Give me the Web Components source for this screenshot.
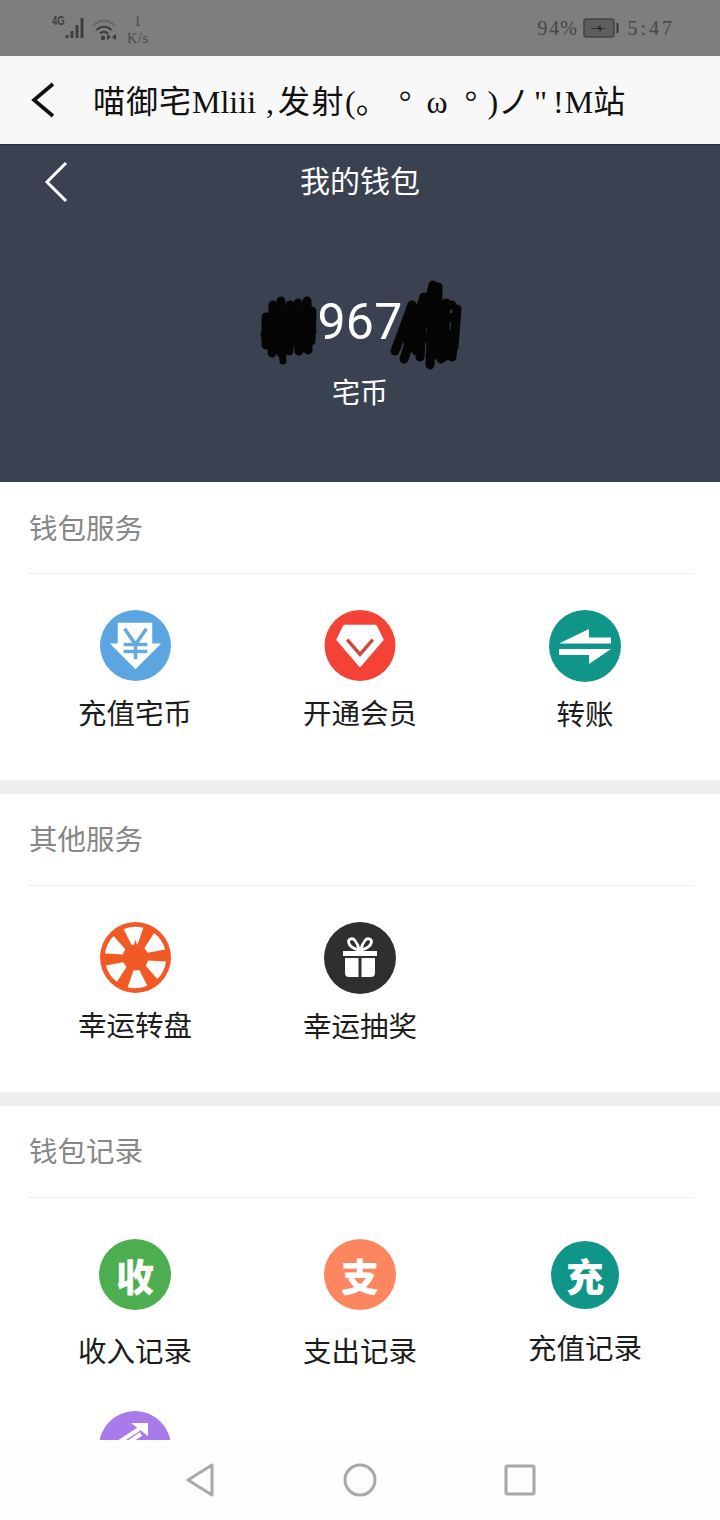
<!DOCTYPE html>
<html lang="zh">
<head>
<meta charset="utf-8">
<title>我的钱包</title>
<style>
  html, body { margin: 0; padding: 0; }
  body {
    width: 720px;
    height: 1520px;
    overflow: hidden;
    display: flex;
    flex-direction: column;
    background: #fff;
    font-family: "Noto Sans CJK SC", "Liberation Sans", sans-serif;
  }
  main { flex: 1; min-height: 0; overflow: hidden; display: flex; flex-direction: column; }
  svg { display: block; }
  title-bar span { margin-left: var(--m); }
</style>
</head>
<body>
  <status-bar></status-bar>
  <title-bar><span style="letter-spacing:1px">喵御宅</span>Mliii<span style="--m:10px">,</span><span style="--m:4px;letter-spacing:1.500px">发射</span>(。<span style="--m:11px">°</span> <span style="--m:7px">ω</span> <span style="--m:9px">°</span><span style="--m:10px">)</span>ノ<span style="--m:4px">"</span><span style="--m:6px">!</span><span style="--m:1px">M</span>站</title-bar>
  <main>
    <wallet-header amount="967" unit="宅币">我的钱包</wallet-header>

    <wallet-section heading="钱包服务" style="--title-pad:2px">
      <service-item label="充值宅币">
        <svg width="71" height="71" viewBox="0 0 72 72">
          <circle cx="36" cy="36" r="36" fill="#5ba6e0"/>
          <path d="M18 13H53V34H62L36 60L10 34H18Z" fill="#fff"/>
          <path d="M25 19L36 35L47 19M36 35V50M24 35H48M24 42H48" fill="none" stroke="#68a9dc" stroke-width="3.6"/>
        </svg>
      </service-item>
      <service-item label="开通会员">
        <svg width="72" height="71" viewBox="0 0 72 72">
          <circle cx="36" cy="36" r="36" fill="#f44336"/>
          <path d="M20 16H52L59 30L36 57L13 30Z" fill="#fff" stroke="#fff" stroke-width="2" stroke-linejoin="round"/>
          <path d="M23 30L36 45L49 30" fill="none" stroke="#c5503f" stroke-width="3.6"/>
        </svg>
      </service-item>
      <service-item label="转账">
        <svg width="72" height="72" viewBox="0 0 72 72">
          <circle cx="36" cy="36" r="36" fill="#0f9688"/>
          <path d="M10 33.500L40 19V27.500H62V33.500Z" fill="#fff"/>
          <path d="M10 39H62L40 54V45H10Z" fill="#fff"/>
        </svg>
      </service-item>
    </wallet-section>

    <wallet-section heading="其他服务">
      <service-item label="幸运转盘">
        <svg width="71" height="71" viewBox="0 0 72 72">
          <circle cx="36" cy="36" r="36" fill="#f15a24"/>
          <g fill="#fff" transform="translate(36 36) rotate(-4)">
            <path d="M-10 -29.500A31 31 0 0 1 10 -29.500L3 -13H-3Z"/>
            <path transform="rotate(60)" d="M-10 -29.500A31 31 0 0 1 10 -29.500L3 -13H-3Z"/>
            <path transform="rotate(120)" d="M-10 -29.500A31 31 0 0 1 10 -29.500L3 -13H-3Z"/>
            <path transform="rotate(180)" d="M-10 -29.500A31 31 0 0 1 10 -29.500L3 -13H-3Z"/>
            <path transform="rotate(240)" d="M-10 -29.500A31 31 0 0 1 10 -29.500L3 -13H-3Z"/>
            <path transform="rotate(300)" d="M-10 -29.500A31 31 0 0 1 10 -29.500L3 -13H-3Z"/>
          </g>
          <circle cx="36" cy="36" r="11.500" fill="#f15a24"/>
          <path d="M33.500 26L36 18L38.500 26Z" fill="#f15a24"/>
        </svg>
      </service-item>
      <service-item label="幸运抽奖">
        <svg width="72" height="72" viewBox="0 0 72 72">
          <circle cx="36" cy="36" r="36" fill="#2f2f2f"/>
          <path d="M19 29H53V34H19Z" fill="#fff"/>
          <path d="M21 36H34.500V55H25A4 4 0 0 1 21 51ZM37.500 36H51V51A4 4 0 0 1 47 55H37.500Z" fill="#fff"/>
          <path d="M35 28C30 27 25 24 24.500 20C24.500 16 29 16 31 18.500C33 21 34.500 24 35 28ZM37 28C42 27 47 24 47.500 20C47.500 16 43 16 41 18.500C39 21 37.500 24 37 28Z" fill="none" stroke="#fff" stroke-width="2.800"/>
        </svg>
      </service-item>
    </wallet-section>

    <wallet-section heading="钱包记录">
      <service-item label="收入记录" style="--item-top:41px;--label-gap:20px">
        <letter-badge color="#4cae50">收</letter-badge>
      </service-item>
      <service-item label="支出记录" style="--item-top:41px;--label-gap:20px">
        <letter-badge color="#fb8660">支</letter-badge>
      </service-item>
      <service-item label="充值记录" style="--item-top:43px;--label-gap:18px">
        <letter-badge color="#0f9688" size="68">充</letter-badge>
      </service-item>
      <service-item style="--item-top:41px">
        <svg width="72" height="72" viewBox="0 0 72 72">
          <circle cx="36" cy="36" r="36" fill="#a97bea"/>
          <path d="M20 31L40 18" fill="none" stroke="#fff" stroke-width="4"/>
          <path d="M32 12H49V25Z" fill="#fff"/>
          <path d="M30 31L42 23" fill="none" stroke="#fff" stroke-width="4"/>
        </svg>
      </service-item>
    </wallet-section>
  </main>
  <nav-bar></nav-bar>

<script>
class StatusBar extends HTMLElement {
  constructor() {
    super();
    this.attachShadow({ mode: "open" });
    this.shadowRoot.innerHTML = `
      <style>
        :host {
          display: flex;
          justify-content: space-between;
          align-items: center;
          box-sizing: border-box;
          height: 56px;
          flex: none;
          padding: 0 48px 0 52px;
          background: #7e7e7e;
          color: #3f3f3f;
        }
        .left, .right { display: flex; align-items: center; }
        .net { font: bold 12px/12px "Liberation Sans", sans-serif; margin: -14px 0 0 0; transform: scaleX(0.8); transform-origin: left; width: 12px; }
        .speed {
          display: flex;
          flex-direction: column;
          align-items: center;
          margin: 3px 0 0 9px;
          font: 14px/17px "Liberation Serif", serif;
          letter-spacing: 0.8px;
          color: #484848;
        }
        .pct, .time { font: 20px/24px "Liberation Serif", serif; letter-spacing: 1.400px; color: #474747; }
        .time { letter-spacing: 3px; margin-left: 8px; margin-right: -3px; }
        .bat { margin-left: 5px; }
      </style>
      <div class="left">
        <span class="net">4G</span>
        <svg width="22" height="24" viewBox="0 0 22 24">
          <path d="M2 22V19M7 22V15M12 22V9M17 22V2" stroke="#3c3c3c" stroke-width="2.800" transform="translate(1 0)"/>
        </svg>
        <svg style="margin:4px 0 0 6px" width="26" height="24" viewBox="0 0 26 24">
          <path d="M1 8C7 1 17 1 23 8" fill="none" stroke="#666" stroke-width="2"/>
          <path d="M4.500 12C9 7.500 15 7.500 19.500 12M8 15.500C10.500 13 13.500 13 16 15.500" fill="none" stroke="#3c3c3c" stroke-width="2"/>
          <circle cx="11" cy="20" r="2.200" fill="#3c3c3c"/>
          <path d="M16 17L20 20L16 23ZM25 17L21 20L25 23Z" fill="#3c3c3c" transform="translate(-1 -1)"/>
        </svg>
        <div class="speed"><span>1</span><span>K/s</span></div>
      </div>
      <div class="right">
        <span class="pct">94%</span>
        <svg class="bat" width="36" height="20" viewBox="0 0 36 20">
          <rect x="1" y="1" width="30" height="18" rx="2" fill="#5e5e5e" stroke="#444" stroke-width="1.500"/>
          <path d="M8 10H14L17 7L18 10H24L19 11L17 14L16 11H8Z" fill="#2e2e2e"/>
          <rect x="33.500" y="5" width="2" height="10" fill="#333"/>
        </svg>
        <span class="time">5:47</span>
      </div>`;
  }
}

class TitleBar extends HTMLElement {
  constructor() {
    super();
    this.attachShadow({ mode: "open" });
    this.shadowRoot.innerHTML = `
      <style>
        :host {
          display: flex;
          align-items: center;
          box-sizing: border-box;
          height: 88px;
          flex: none;
          padding: 3px 0 0 31px;
          background: #f8f8f8;
          color: #111;
          font: 32px/40px "Liberation Serif", "Noto Sans CJK SC", serif;
          white-space: nowrap;
        }
        svg { display: block; flex: none; margin: -3px 38px 0 0; }
        .text { display: block; }
      </style>
      <svg width="24" height="36" viewBox="0 0 24 36">
        <path d="M22 2L3 18L22 34" fill="none" stroke="#111" stroke-width="3.600"/>
      </svg>
      <span class="text"><slot></slot></span>`;
  }
}

class WalletHeader extends HTMLElement {
  constructor() {
    super();
    this.attachShadow({ mode: "open" });
  }

  connectedCallback() {
    this.shadowRoot.innerHTML = `
      <style>
        :host {
          display: block;
          position: relative;
          box-sizing: border-box;
          height: 338px;
          flex: none;
          background: #3a4150;
          color: #fff;
          text-align: center;
          border-top: 1px solid #2b303b;
        }
        .top {
          display: flex;
          justify-content: center;
          align-items: center;
          height: 67px;
          font-size: 30px;
          position: relative;
        }
        .back { position: absolute; left: 44px; top: 16px; display: block; }
        .amount {
          margin-top: 80px;
          font: 50px/60px Roboto, "Liberation Sans", sans-serif;
          letter-spacing: 0.2px;
        }
        .unit { margin-top: 21px; font-size: 28px; line-height: 36px; }
        .scribble { position: absolute; left: 0; top: 0; }
      </style>
      <div class="top">
        <svg class="back" width="24" height="42" viewBox="0 0 24 42">
          <path d="M22 2L3 21L22 40" fill="none" stroke="#fff" stroke-width="3"/>
        </svg>
        <slot></slot>
      </div>
      <div class="amount">${this.getAttribute("amount")}</div>
      <div class="unit">${this.getAttribute("unit")}</div>
      <svg class="scribble" width="720" height="337" viewBox="0 0 720 337">
        <g fill="none" stroke="#050505" stroke-linecap="round" stroke-linejoin="round">
          <path d="M266 172L266 200M273 160L272 208M281 156L281 208M290 160L289 206M298 158L299 206M307 156L308 205M312 166L311 196" stroke-width="9"/>
          <path d="M282 205L283 216" stroke-width="7"/>
          <path d="M265 190L312 186M268 176L310 172M268 198L310 196" stroke-width="9"/>
          <path d="M395 206L412 160L408 198M404 214L424 152L420 212M416 206L433 140L430 220M430 212L438 142L437 210M441 214L446 158L444 212M452 212L457 164L454 202" stroke-width="9"/>
          <path d="M414 180L455 172M410 195L452 190M416 165L452 160" stroke-width="9"/>
        </g>
      </svg>`;
  }
}

class WalletSection extends HTMLElement {
  constructor() {
    super();
    this.attachShadow({ mode: "open" });
  }

  connectedCallback() {
    this.shadowRoot.innerHTML = `
      <style>
        :host {
          display: block;
          flex: none;
          background: #fff;
          border-bottom: 14px solid #efefef;
        }
        :host(:last-of-type) { border-bottom: 0; }
        h2 {
          box-sizing: border-box;
          height: 92px;
          margin: 0 27px 0 28px;
          padding: var(--title-pad, 0px) 0 4px 1px;
          display: flex;
          align-items: center;
          border-bottom: 1px solid #eeeeee;
          font-size: 28.500px;
          font-weight: 400;
          color: #878787;
        }
        .grid {
          display: grid;
          grid-template-columns: repeat(3, 225px);
          grid-auto-rows: 172px;
          padding: 0 22.500px 34px;
        }
      </style>
      <h2>${this.getAttribute("heading")}</h2>
      <div class="grid"><slot></slot></div>`;
  }
}

class ServiceItem extends HTMLElement {
  constructor() {
    super();
    this.attachShadow({ mode: "open" });
  }

  connectedCallback() {
    const label = this.getAttribute("label");
    this.shadowRoot.innerHTML = `
      <style>
        :host {
          display: flex;
          flex-direction: column;
          align-items: center;
          box-sizing: border-box;
          padding-top: var(--item-top, 36px);
        }
        .label {
          margin-top: var(--label-gap, 11px);
          font-size: 28.500px;
          line-height: 40px;
          color: #1c1c1c;
          white-space: nowrap;
        }
      </style>
      <slot></slot>
      ${label ? `<div class="label">${label}</div>` : ""}`;
  }
}

class LetterBadge extends HTMLElement {
  constructor() {
    super();
    this.attachShadow({ mode: "open" });
  }

  connectedCallback() {
    const size = this.getAttribute("size") || 72;
    this.shadowRoot.innerHTML = `
      <style>
        :host {
          display: flex;
          align-items: center;
          justify-content: center;
          width: ${size}px;
          height: ${size}px;
          border-radius: 50%;
          background: ${this.getAttribute("color")};
          color: #fff;
          font-size: 38px;
          font-weight: 900;
          line-height: 1;
        }
      </style>
      <slot></slot>`;
  }
}

class NavBar extends HTMLElement {
  constructor() {
    super();
    this.attachShadow({ mode: "open" });
    this.shadowRoot.innerHTML = `
      <style>
        :host {
          display: flex;
          justify-content: center;
          align-items: center;
          gap: 112px;
          height: 80px;
          flex: none;
          background: #fdfdfd;
        }
        svg { display: block; }
      </style>
      <svg width="48" height="36" viewBox="0 0 48 36">
        <path d="M36 3V33L12 18Z" fill="none" stroke="#a8a8a8" stroke-width="3" stroke-linejoin="round"/>
      </svg>
      <svg width="48" height="36" viewBox="0 0 48 36">
        <circle cx="24" cy="18" r="15" fill="none" stroke="#a8a8a8" stroke-width="3"/>
      </svg>
      <svg width="48" height="36" viewBox="0 0 48 36">
        <rect x="10" y="4" width="28" height="28" rx="1.500" fill="none" stroke="#a8a8a8" stroke-width="3"/>
      </svg>`;
  }
}

customElements.define("status-bar", StatusBar);
customElements.define("title-bar", TitleBar);
customElements.define("wallet-header", WalletHeader);
customElements.define("wallet-section", WalletSection);
customElements.define("service-item", ServiceItem);
customElements.define("letter-badge", LetterBadge);
customElements.define("nav-bar", NavBar);
</script>
</body>
</html>
